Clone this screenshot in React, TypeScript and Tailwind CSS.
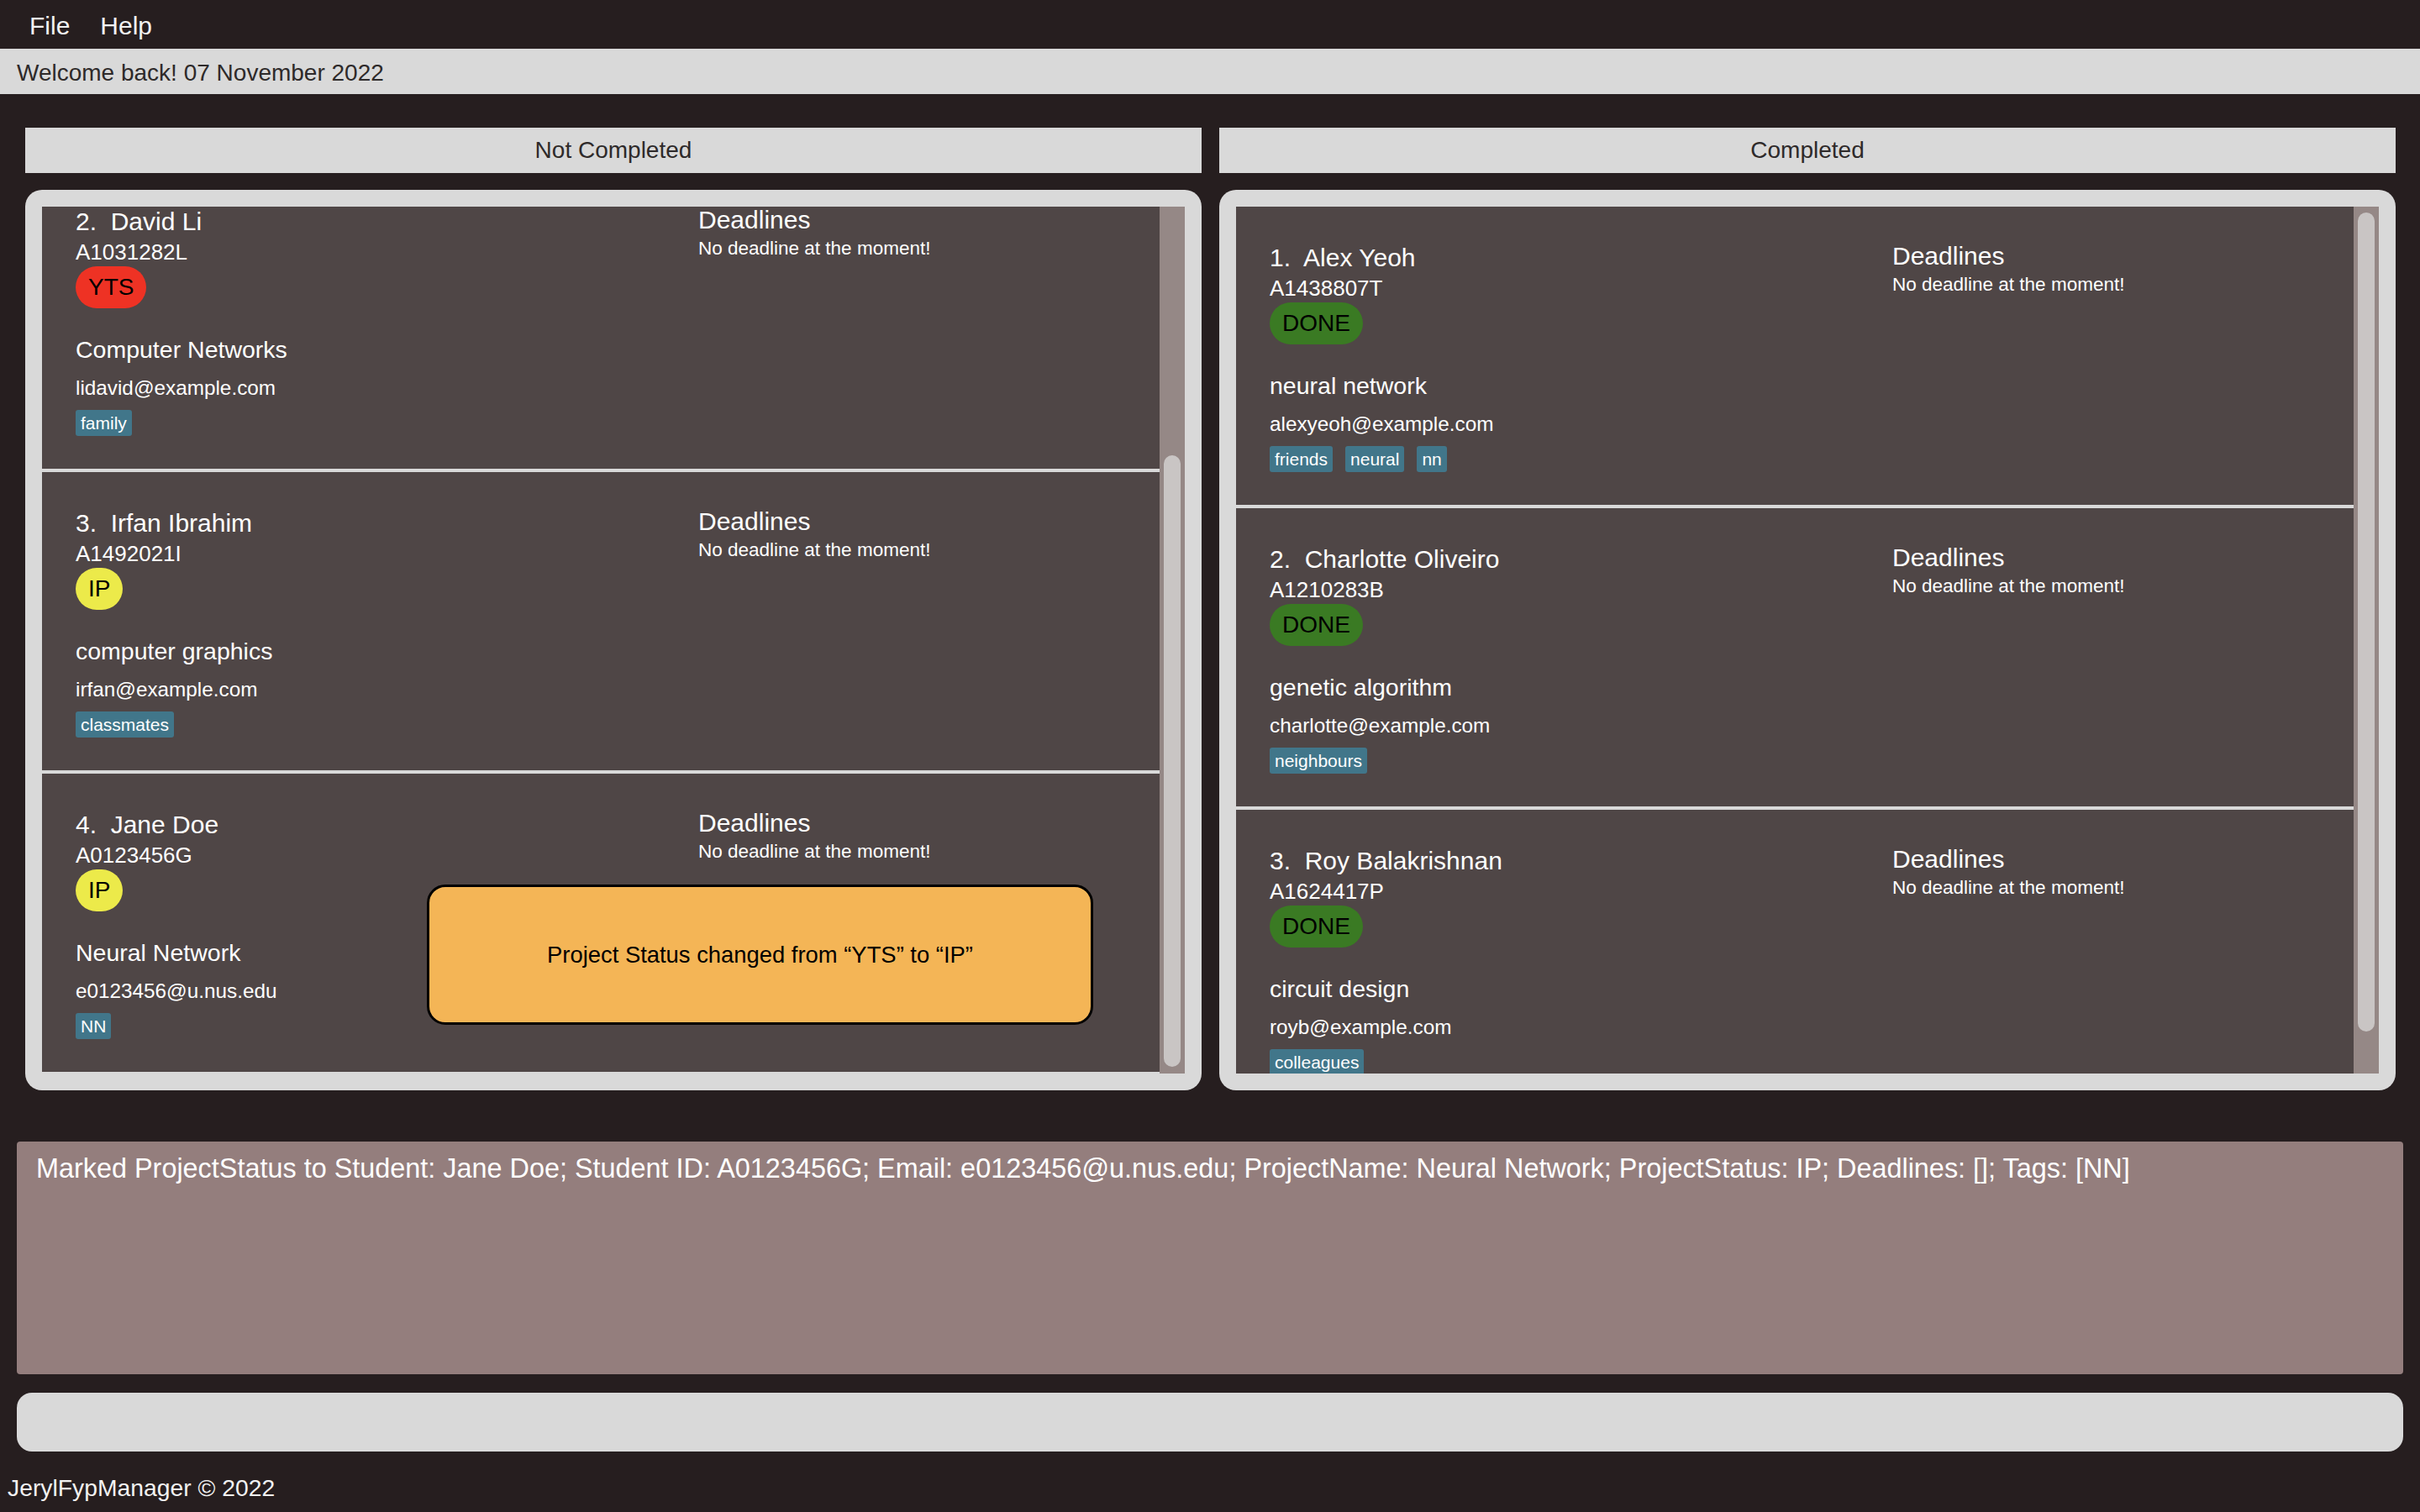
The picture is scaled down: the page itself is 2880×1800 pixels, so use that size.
type Status = "YTS" | "IP" | "DONE";

type Student = {
  idx: number;
  name: string;
  id: string;
  status: Status;
  project: string;
  email: string;
  tags: string[];
};

const notCompleted: Student[] = [
  { idx: 2, name: "David Li", id: "A1031282L", status: "YTS", project: "Computer Networks", email: "lidavid@example.com", tags: ["family"] },
  { idx: 3, name: "Irfan Ibrahim", id: "A1492021I", status: "IP", project: "computer graphics", email: "irfan@example.com", tags: ["classmates"] },
  { idx: 4, name: "Jane Doe", id: "A0123456G", status: "IP", project: "Neural Network", email: "e0123456@u.nus.edu", tags: ["NN"] },
];

const completed: Student[] = [
  { idx: 1, name: "Alex Yeoh", id: "A1438807T", status: "DONE", project: "neural network", email: "alexyeoh@example.com", tags: ["friends", "neural", "nn"] },
  { idx: 2, name: "Charlotte Oliveiro", id: "A1210283B", status: "DONE", project: "genetic algorithm", email: "charlotte@example.com", tags: ["neighbours"] },
  { idx: 3, name: "Roy Balakrishnan", id: "A1624417P", status: "DONE", project: "circuit design", email: "royb@example.com", tags: ["colleagues"] },
];

const badgeColor: Record<Status, string> = {
  YTS: "bg-[#ee3224]",
  IP: "bg-[#ecea4a]",
  DONE: "bg-[#3a7a23]",
};

function StudentCard({ s }: { s: Student }) {
  return (
    <div className="flex h-[359px] shrink-0 border-b-4 border-[#d9d9d9] bg-[#4f4646] text-white">
      <div className="flex w-[781px] shrink-0 flex-col items-start pl-[40px] pt-[46px]">
        <div className="text-[30px] leading-none whitespace-pre">{`${s.idx}.  ${s.name}`}</div>
        <div className="mt-[8px] text-[26px] leading-none">{s.id}</div>
        <div className={`mt-[4px] flex h-[50px] items-center rounded-full px-[15px] text-[28px] text-black ${badgeColor[s.status]}`}>
          {s.status}
        </div>
        <div className="mt-[35px] text-[28.5px] leading-none">{s.project}</div>
        <div className="mt-[19px] text-[24.3px] leading-none">{s.email}</div>
        <div className="mt-[14px] flex gap-[15px]">
          {s.tags.map((t) => (
            <span key={t} className="flex h-[31px] items-center rounded-[3px] bg-[#41768a] px-[6px] text-[21px] text-white">
              {t}
            </span>
          ))}
        </div>
      </div>
      <div className="pt-[44px]">
        <div className="text-[30px] leading-none">Deadlines</div>
        <div className="mt-[8px] text-[22.5px] leading-none">No deadline at the moment!</div>
      </div>
    </div>
  );
}

function Column({ title, students, offset, thumb }: { title: string; students: Student[]; offset: string; thumb: string }) {
  return (
    <div className="flex w-[1400px] flex-col gap-[20px]">
      <div className="flex h-[54px] items-center justify-center bg-[#d9d9d9] text-[28px] text-[#2e2a2a]">{title}</div>
      <div className="flex h-[1072px] rounded-[20px] bg-[#d9d9d9] p-[20px]">
        <div className="flex-1 overflow-hidden bg-[#4f4646]">
          <div className={`flex flex-col ${offset}`}>
            {students.map((s) => (
              <StudentCard key={s.idx} s={s} />
            ))}
          </div>
        </div>
        <div className={`flex w-[30px] flex-col bg-[#958886] px-[5px] ${thumb}`}>
          <div className="flex-1 rounded-[10px] bg-[#c9c5c4]" />
        </div>
      </div>
    </div>
  );
}

export default function App() {
  return (
    <div className="relative flex h-[1800px] w-[2880px] flex-col overflow-hidden bg-[#261e1f] font-['Liberation_Sans',Arial,sans-serif]">
      {/* Menu */}
      <div className="flex h-[58px] shrink-0 items-center gap-[36px] pl-[35px] pt-[3px] text-[30px] leading-none text-[#f2f2f2]">
        <span>File</span>
        <span>Help</span>
      </div>

      {/* Welcome bar */}
      <div className="flex h-[54px] shrink-0 items-center bg-[#d9d9d9] pl-[20px] pt-[4px] text-[28px] leading-none text-[#2e2a2a]">
        Welcome back! 07 November 2022
      </div>

      {/* Lists */}
      <div className="mt-[40px] flex gap-[21px] pl-[30px]">
        <Column title="Not Completed" students={notCompleted} offset="-mt-[43px]" thumb="pt-[296px] pb-[8px]" />
        <Column title="Completed" students={completed} offset="" thumb="pt-[7px] pb-[50px]" />
      </div>

      {/* Result display */}
      <div className="mx-[20px] mt-[61px] h-[277px] shrink-0 rounded-[4px] bg-[#947e7d] pl-[23px] pt-[16px] text-[32.4px] leading-none text-white">
        Marked ProjectStatus to Student: Jane Doe; Student ID: A0123456G; Email: e0123456@u.nus.edu; ProjectName: Neural Network; ProjectStatus: IP; Deadlines: []; Tags: [NN]
      </div>

      {/* Command box */}
      <div className="mx-[20px] mt-[22px] h-[70px] shrink-0 rounded-[18px] bg-[#d9d9d9]" />

      {/* Footer */}
      <div className="mt-[29px] pl-[9px] text-[28.3px] leading-none text-[#f2f2f2]">JerylFypManager © 2022</div>

      {/* Toast */}
      <div className="absolute left-[508px] top-[1053px] flex h-[167px] w-[793px] items-center justify-center rounded-[22px] border-[3px] border-black bg-[#f4b556] text-[27.4px] text-black">
        Project Status changed from “YTS” to “IP”
      </div>
    </div>
  );
}
